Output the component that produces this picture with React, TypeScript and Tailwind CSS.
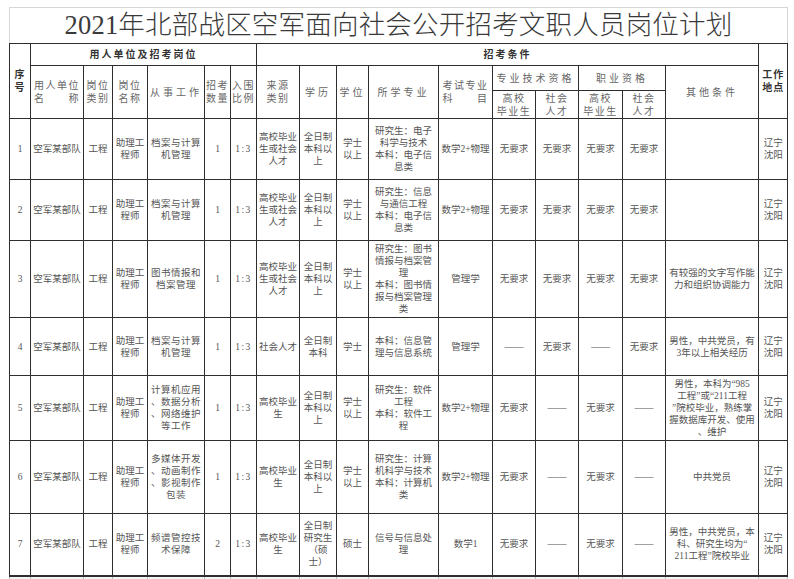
import type { ReactNode } from 'react';

type Row = {
  n: string;
  work: string;
  num: string;
  src: string;
  edu: string;
  deg: string;
  major: string;
  exam: string;
  req: [string, string, string, string];
  other: string;
  h: string;
};

const ROWS: Row[] = [
  {
    n: '1',
    work: '档案与计算\n机管理',
    num: '1',
    src: '高校毕业\n生或社会\n人才',
    edu: '全日制\n本科以\n上',
    deg: '学士\n以上',
    major: '研究生：电子\n科学与技术\n本科：电子信\n息类',
    exam: '数学2+物理',
    req: ['无要求', '无要求', '无要求', '无要求'],
    other: '',
    h: 'h-[61px]',
  },
  {
    n: '2',
    work: '档案与计算\n机管理',
    num: '1',
    src: '高校毕业\n生或社会\n人才',
    edu: '全日制\n本科以\n上',
    deg: '学士\n以上',
    major: '研究生：信息\n与通信工程\n本科：电子信\n息类',
    exam: '数学2+物理',
    req: ['无要求', '无要求', '无要求', '无要求'],
    other: '',
    h: 'h-[61px]',
  },
  {
    n: '3',
    work: '图书情报和\n档案管理',
    num: '1',
    src: '高校毕业\n生或社会\n人才',
    edu: '全日制\n本科以\n上',
    deg: '学士\n以上',
    major: '研究生：图书\n情报与档案管\n理\n本科：图书情\n报与档案管理\n类',
    exam: '管理学',
    req: ['无要求', '无要求', '无要求', '无要求'],
    other: '有较强的文字写作能\n力和组织协调能力',
    h: 'h-[77px]',
  },
  {
    n: '4',
    work: '档案与计算\n机管理',
    num: '1',
    src: '社会人才',
    edu: '全日制\n本科',
    deg: '学士',
    major: '本科：信息管\n理与信息系统',
    exam: '管理学',
    req: ['——', '无要求', '——', '无要求'],
    other: '男性，中共党员，有\n3年以上相关经历',
    h: 'h-[58px]',
  },
  {
    n: '5',
    work: '计算机应用\n、数据分析\n、网络维护\n等工作',
    num: '1',
    src: '高校毕业\n生',
    edu: '全日制\n本科以\n上',
    deg: '学士\n以上',
    major: '研究生：软件\n工程\n本科：软件工\n程',
    exam: '数学2+物理',
    req: ['无要求', '——', '无要求', '——'],
    other: '男性，本科为“985\n工程”或“211工程\n”院校毕业，熟练掌\n握数据库开发、使用\n、维护',
    h: 'h-[65px]',
  },
  {
    n: '6',
    work: '多媒体开发\n、动画制作\n、影视制作\n包装',
    num: '1',
    src: '高校毕业\n生',
    edu: '全日制\n本科以\n上',
    deg: '学士\n以上',
    major: '研究生：计算\n机科学与技术\n本科：计算机\n类',
    exam: '数学2+物理',
    req: ['无要求', '——', '无要求', '——'],
    other: '中共党员',
    h: 'h-[73px]',
  },
  {
    n: '7',
    work: '频谱管控技\n术保障',
    num: '2',
    src: '高校毕业\n生',
    edu: '全日制\n研究生\n（硕\n士）',
    deg: '硕士',
    major: '信号与信息处\n理',
    exam: '数学1',
    req: ['无要求', '——', '无要求', '——'],
    other: '男性，中共党员，本\n科、研究生均为“\n211工程”院校毕业',
    h: 'h-[62px]',
  },
];

const WIDTHS = [
  'w-[21px]', 'w-[53px]', 'w-[29px]', 'w-[35px]', 'w-[57px]', 'w-[26px]',
  'w-[26px]', 'w-[43px]', 'w-[37px]', 'w-[32px]', 'w-[70px]', 'w-[54px]',
  'w-[43px]', 'w-[43px]', 'w-[44px]', 'w-[43px]', 'w-[93px]', 'w-[29px]',
];

const cell = 'border border-[#2e2e2e] p-0 text-center align-middle whitespace-pre';
const bold = `${cell} font-bold text-[10px] leading-[13px] text-[#333] tracking-[1px]`;
const head = `${cell} font-normal text-[10px] leading-[13px] text-[#666] tracking-[1.5px]`;

function Td({ children, className = '' }: { children?: ReactNode; className?: string }) {
  return <td className={`${cell} ${className}`}>{children}</td>;
}

export default function App() {
  return (
    <div className="h-[579px] w-[794px] overflow-hidden bg-white font-['Liberation_Serif','Noto_Sans_CJK_SC',serif]">
      <div className="ml-[9px] mt-[7px] flex h-[36px] w-[779px] items-center justify-center border-l border-r border-t border-[#d6d6d6]">
        <h1 className="text-[26.5px] font-light leading-none tracking-[0.2px] text-[#3a3a3a]">
          2021年北部战区空军面向社会公开招考文职人员岗位计划
        </h1>
      </div>

      <table className="ml-[9px] w-[779px] table-fixed border-collapse text-[9.5px] leading-[12px] text-[#555]">
        <colgroup>
          {WIDTHS.map((w, i) => (
            <col key={i} className={w} />
          ))}
        </colgroup>
        <thead>
          <tr className="h-[22px]">
            <th rowSpan={3} className={bold}>{'序\n号'}</th>
            <th colSpan={6} className={`${bold} tracking-[2px]`}>用人单位及招考岗位</th>
            <th colSpan={10} className={`${bold} tracking-[2px]`}>招考条件</th>
            <th rowSpan={3} className={bold}>{'工作\n地点'}</th>
          </tr>
          <tr className="h-[25px]">
            <th rowSpan={2} className={head}>{'用人单位\n名　　称'}</th>
            <th rowSpan={2} className={head}>{'岗位\n类别'}</th>
            <th rowSpan={2} className={head}>{'岗位\n名称'}</th>
            <th rowSpan={2} className={`${head} tracking-[3px]`}>从事工作</th>
            <th rowSpan={2} className={head}>{'招考\n数量'}</th>
            <th rowSpan={2} className={head}>{'入围\n比例'}</th>
            <th rowSpan={2} className={head}>{'来源\n类别'}</th>
            <th rowSpan={2} className={`${head} tracking-[3px]`}>学历</th>
            <th rowSpan={2} className={`${head} tracking-[3px]`}>学位</th>
            <th rowSpan={2} className={`${head} tracking-[3px]`}>所学专业</th>
            <th rowSpan={2} className={head}>{'考试专业\n科　　目'}</th>
            <th colSpan={2} className={`${head} tracking-[3px]`}>专业技术资格</th>
            <th colSpan={2} className={`${head} tracking-[3px]`}>职业资格</th>
            <th rowSpan={2} className={`${head} tracking-[3px]`}>其他条件</th>
          </tr>
          <tr className="h-[28px]">
            <th className={head}>{'高校\n毕业生'}</th>
            <th className={head}>{'社会\n人才'}</th>
            <th className={head}>{'高校\n毕业生'}</th>
            <th className={head}>{'社会\n人才'}</th>
          </tr>
        </thead>
        <tbody>
          {ROWS.map((r) => (
            <tr key={r.n} className={r.h}>
              <Td>{r.n}</Td>
              <Td>空军某部队</Td>
              <Td>工程</Td>
              <Td>{'助理工\n程师'}</Td>
              <Td className="tracking-[0.5px]">{r.work}</Td>
              <Td>{r.num}</Td>
              <Td className="tracking-[1.5px]">1:3</Td>
              <Td>{r.src}</Td>
              <Td>{r.edu}</Td>
              <Td>{r.deg}</Td>
              <Td>{r.major}</Td>
              <Td>{r.exam}</Td>
              {r.req.map((q, i) => (
                <Td key={i}>{q}</Td>
              ))}
              <Td>{r.other}</Td>
              <Td>{'辽宁\n沈阳'}</Td>
            </tr>
          ))}
          <tr className="h-[20px] border-t-2 border-[#2e2e2e]">
            {WIDTHS.map((_, i) => (
              <td key={i} className="border-x border-[#bdbdbd] bg-[#f4f4f4] p-0" />
            ))}
          </tr>
        </tbody>
      </table>
    </div>
  );
}
